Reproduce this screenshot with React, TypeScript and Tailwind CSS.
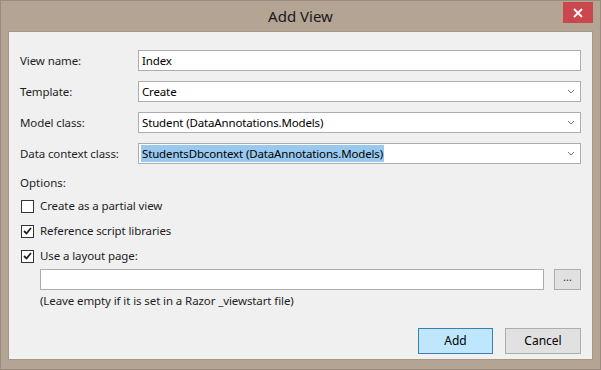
import React from "react";

const font = { fontFamily: '"Noto Sans", "Open Sans", sans-serif' };

function Chevron() {
  return (
    <svg width="8" height="5" viewBox="0 0 8 5" className="shrink-0">
      <path d="M1 1 L4 4 L7 1" fill="none" stroke="#7a7a7a" strokeWidth="1" />
    </svg>
  );
}

function TextField({ value }: { value?: string }) {
  return (
    <div className="flex h-[21px] flex-1 items-center border border-[#abadb3] bg-white px-[3px] text-[11.5px] tracking-[-0.15px] text-black">
      {value}
    </div>
  );
}

function Combo({ value, selected }: { value: string; selected?: boolean }) {
  return (
    <div className="flex h-[21px] flex-1 items-center justify-between border border-[#abadb3] bg-white pl-[2px] pr-[5px] text-[11.5px] tracking-[-0.15px] text-black">
      <span className={selected ? "bg-[#99c9ef] px-[1px] leading-[17px]" : "px-[1px]"}>{value}</span>
      <Chevron />
    </div>
  );
}

function Row({ label, children }: { label: string; children: React.ReactNode }) {
  return (
    <div className="flex items-center">
      <div className="w-[118px] text-[11.5px] tracking-[-0.1px] text-[#1e1e1e]">{label}</div>
      {children}
    </div>
  );
}

function Check({ checked, label }: { checked?: boolean; label: string }) {
  return (
    <div className="flex h-[16px] items-center">
      <div className="ml-[1px] flex h-[13px] w-[13px] items-center justify-center border border-[#333333] bg-white">
        {checked && (
          <svg width="9" height="8" viewBox="0 0 9 8">
            <path d="M1 4 L3.5 6.5 L8 1" fill="none" stroke="#222" strokeWidth="1.8" />
          </svg>
        )}
      </div>
      <span className="ml-[6px] text-[11.5px] tracking-[-0.1px] text-[#1e1e1e]">{label}</span>
    </div>
  );
}

export default function App() {
  return (
    <div style={font} className="flex h-[370px] w-[601px] flex-col border border-[#9a8b7e] bg-[#b4a494]">
      <div className="relative flex h-[30px] items-center justify-center">
        <span className="text-[15px] text-[#1a1a1a]">Add View</span>
        <div className="absolute right-[7px] top-[1px] flex h-[21px] w-[30px] items-center justify-center bg-[#c9474d]">
          <svg width="10" height="10" viewBox="0 0 10 10">
            <path d="M1 1 L9 9 M9 1 L1 9" stroke="#fff" strokeWidth="1.8" />
          </svg>
        </div>
      </div>
      <div className="mx-[7px] mb-[9px] flex flex-1 flex-col border border-[#a69685] bg-[#f0f0f0] pl-[11px] pr-[11px] pt-[18px]">
        <div className="flex flex-col gap-[10px]">
          <Row label="View name:">
            <TextField value="Index" />
          </Row>
          <Row label="Template:">
            <Combo value="Create" />
          </Row>
          <Row label="Model class:">
            <Combo value="Student (DataAnnotations.Models)" />
          </Row>
          <Row label="Data context class:">
            <Combo value="StudentsDbcontext (DataAnnotations.Models)" selected />
          </Row>
        </div>
        <div className="mt-[10px] text-[11.5px] leading-[18px] text-[#1e1e1e]">Options:</div>
        <div className="mt-[6px] flex flex-col gap-[9px]">
          <Check label="Create as a partial view" />
          <Check checked label="Reference script libraries" />
          <Check checked label="Use a layout page:" />
        </div>
        <div className="ml-[20px] mt-[5px] flex items-center gap-[10px]">
          <TextField />
          <div className="flex h-[21px] w-[27px] items-center justify-center border border-[#adadad] bg-[#e1e1e1] pb-[4px] text-[11px] text-[#333]">
            ...
          </div>
        </div>
        <div className="ml-[20px] mt-[2px] text-[11.5px] leading-[18px] tracking-[-0.1px] text-[#1e1e1e]">
          (Leave empty if it is set in a Razor _viewstart file)
        </div>
        <div className="mt-auto mb-[5px] flex justify-end gap-[12px]">
          <div className="flex h-[26px] w-[75px] items-center justify-center border border-[#3c7fb1] bg-[#bee6fd] text-[12px] text-black">
            Add
          </div>
          <div className="flex h-[26px] w-[76px] items-center justify-center border border-[#adadad] bg-[#e1e1e1] text-[12px] text-black">
            Cancel
          </div>
        </div>
      </div>
    </div>
  );
}
